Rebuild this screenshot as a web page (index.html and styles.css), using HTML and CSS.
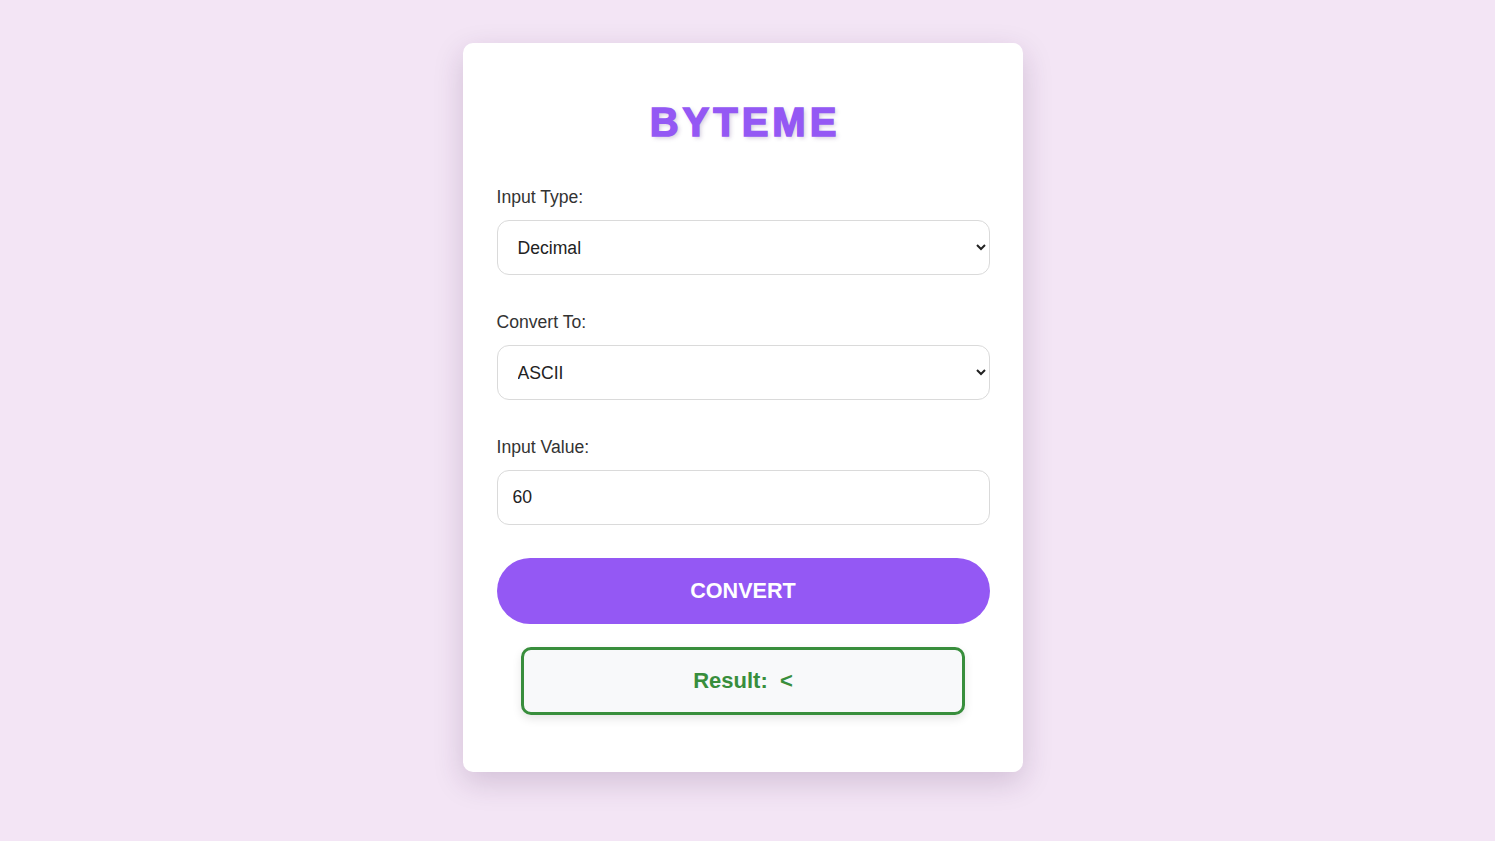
FILE: index.html
```html
<!DOCTYPE html>
<html lang="en">
<head>
<meta charset="utf-8">
<title>BYTEME</title>
<link rel="stylesheet" href="styles.css">
</head>
<body>
<div class="card">
  <h1 class="title">BYTEME</h1>
  <div class="group">
    <label class="label" for="inType">Input Type:</label>
    <select class="field select" id="inType">
      <option>Decimal</option>
      <option>Binary</option>
      <option>Hexadecimal</option>
      <option>ASCII</option>
    </select>
  </div>
  <div class="group">
    <label class="label" for="outType">Convert To:</label>
    <select class="field select" id="outType">
      <option>ASCII</option>
      <option>Binary</option>
      <option>Decimal</option>
      <option>Hexadecimal</option>
    </select>
  </div>
  <div class="group last">
    <label class="label" for="val">Input Value:</label>
    <input class="field input" id="val" type="text" value="60">
  </div>
  <button class="btn">CONVERT</button>
  <div class="result">Result:&nbsp;&nbsp;&lt;</div>
</div>
</body>
</html>
```

FILE: styles.css
```css
* { box-sizing: border-box; }
html, body { margin: 0; padding: 0; }
body {
  background: #f3e5f5;
  font-family: "Liberation Sans", Arial, sans-serif;
  display: flex;
  justify-content: center;
  padding: 43px 10px 0 0;
  min-height: 841px;
}
.card {
  width: 560px;
  height: 729px;
  background: #ffffff;
  border-radius: 10px;
  padding: 34px 33px 34px 34px;
  box-shadow: 0 10px 30px rgba(60, 20, 80, 0.18);
  display: flex;
  flex-direction: column;
}
.title {
  margin: 22px 0 42px;
  height: 46px;
  line-height: 46px;
  text-align: center;
  font-size: 40px;
  font-weight: 900;
  letter-spacing: 4px;
  text-indent: 4px;
  color: #9458f4;
  -webkit-text-stroke: 1.5px #9458f4;
  text-shadow: 2px 2px 4px rgba(80, 40, 120, 0.25);
}
.group { display: flex; flex-direction: column; margin-bottom: 37px; }
.group.last { margin-bottom: 33px; }
.label {
  font-size: 17.6px;
  line-height: 21px;
  color: #333;
  margin-bottom: 12px;
}
.field {
  width: 100%;
  height: 55px;
  border: 1px solid #dadada;
  border-radius: 12px;
  background: #fff;
  font-family: "Liberation Sans", Arial, sans-serif;
  font-size: 17.6px;
  color: #222;
  outline: none;
}
.select { padding: 0 10px 0 16px; }
.input { padding: 0 15px; }
.btn {
  width: 100%;
  height: 66px;
  border: none;
  border-radius: 33px;
  background: #9458f4;
  color: #fff;
  font-family: "Liberation Sans", Arial, sans-serif;
  font-size: 21.6px;
  font-weight: 700;
  margin-bottom: 23px;
}
.result {
  width: 90%;
  align-self: center;
  height: 68px;
  border: 3px solid #388e3c;
  border-radius: 10px;
  background: #f8f9fa;
  box-shadow: 0 4px 10px rgba(0, 0, 0, 0.1);
  color: #388e3c;
  font-size: 22px;
  font-weight: 700;
  display: flex;
  align-items: center;
  justify-content: center;
}
```
